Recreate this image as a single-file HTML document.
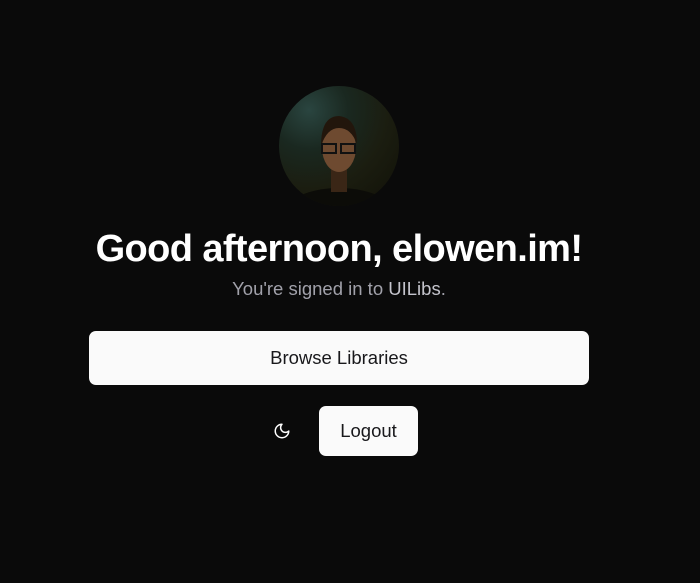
<!DOCTYPE html>
<html><head><style>
body{margin:0;width:700px;height:583px;background:#0a0a0a;font-family:"Liberation Sans",sans-serif;position:relative;overflow:hidden}
.av{position:absolute;left:279px;top:86px;width:120px;height:120px;border-radius:50%;overflow:hidden;background:radial-gradient(circle at 25% 20%,#2a4540 0,#1a2820 30%,#1b1d10 60%,#101007 100%)}
h1{position:absolute;left:0;width:678px;top:228px;margin:0;text-align:center;color:#fff;font-size:38px;font-weight:bold;letter-spacing:-0.6px}
p{position:absolute;left:0;width:678px;top:278px;margin:0;text-align:center;color:#a1a1aa;font-size:18.5px}
p b{font-weight:normal;color:#c4c4cc}
.b1{position:absolute;left:89px;top:331px;width:500px;height:54px;background:#fafafa;border-radius:7px;text-align:center;line-height:54px;color:#18181b;font-size:18.5px}
.b2{position:absolute;left:319px;top:406px;width:99px;height:50px;background:#fafafa;border-radius:7px;text-align:center;line-height:50px;color:#18181b;font-size:18.5px}
</style></head><body>
<div class="av"><svg width="120" height="120">
<ellipse cx="60" cy="128" rx="55" ry="26" fill="#0c0c08"/>
<rect x="52" y="80" width="16" height="26" fill="#3a2616"/>
<ellipse cx="60" cy="62" rx="17" ry="24" fill="#6e4a30"/>
<path d="M42 60 Q42 30 60 30 Q78 32 78 58 Q72 42 60 42 Q48 42 42 60Z" fill="#22160c"/>
<rect x="43" y="58" width="14" height="9" fill="none" stroke="#111" stroke-width="2"/>
<rect x="62" y="58" width="14" height="9" fill="none" stroke="#111" stroke-width="2"/>
</svg></div>
<h1>Good afternoon, elowen.im!</h1>
<p>You're signed in to <b>UILibs</b>.</p>
<div class="b1">Browse Libraries</div>
<svg style="position:absolute;left:273px;top:422px" width="18" height="18" viewBox="0 0 24 24" fill="none" stroke="#fff" stroke-width="2" stroke-linecap="round" stroke-linejoin="round"><path d="M12 3a6 6 0 0 0 9 9 9 9 0 1 1-9-9Z"/></svg>
<div class="b2">Logout</div>
</body></html>
